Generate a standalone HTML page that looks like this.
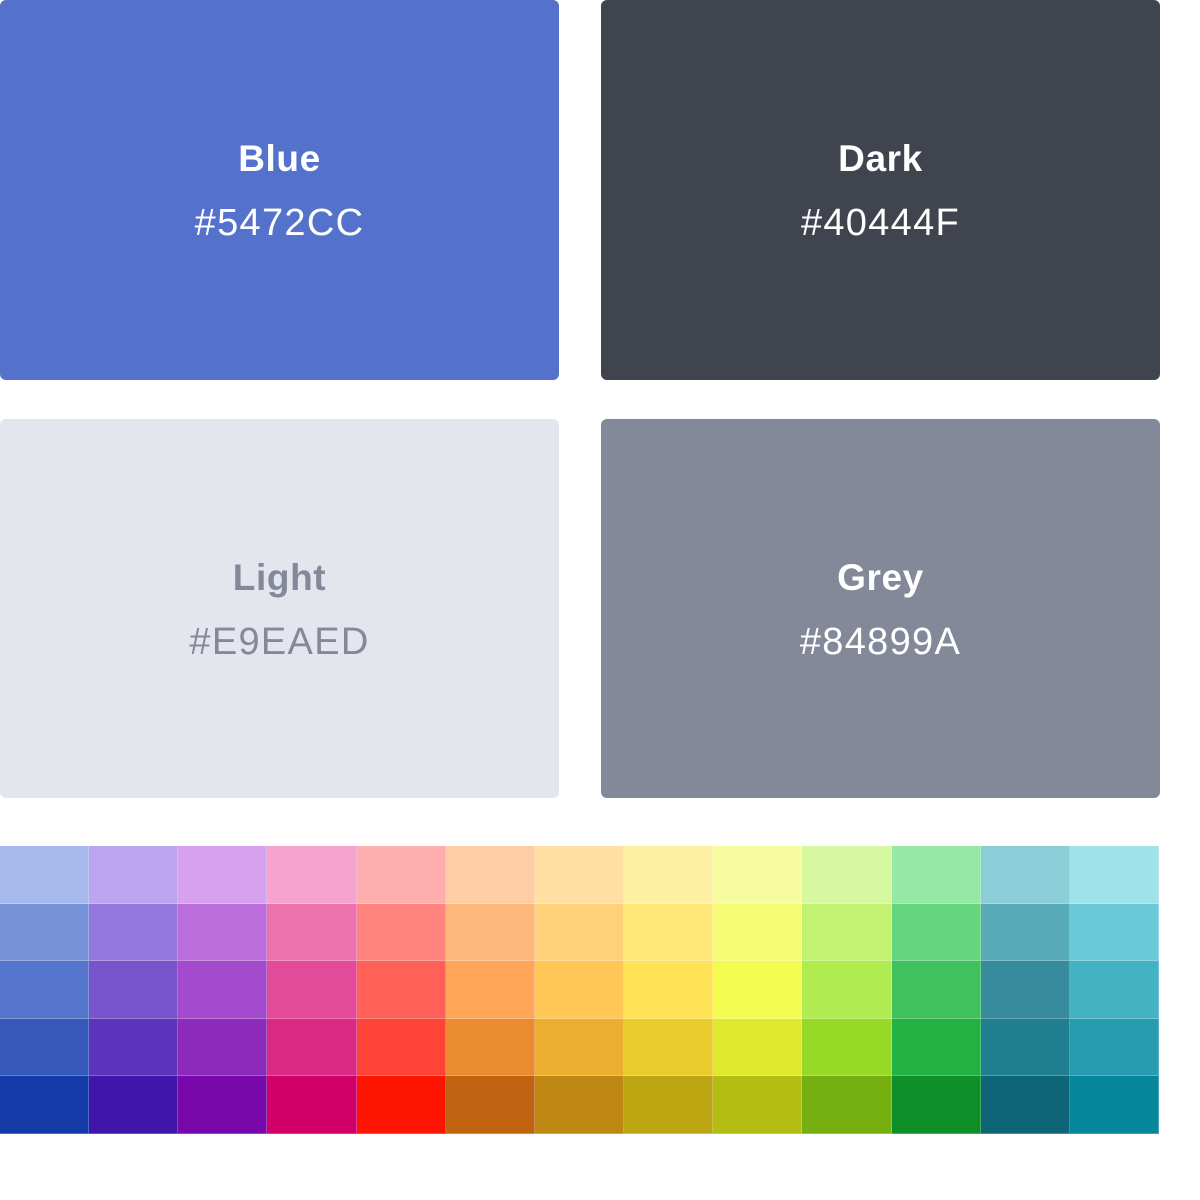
<!DOCTYPE html><html><head><style>
body{margin:0;width:1200px;height:1200px;background:#fff;position:relative;font-family:"Liberation Sans",sans-serif;overflow:hidden}
.c{position:absolute;width:559px;height:380px;border-radius:6px;color:#fff;text-align:center}
.c b{position:absolute;left:0;right:0;top:138px;font-size:37px;font-weight:bold;letter-spacing:.6px}
.c span{position:absolute;left:0;right:0;top:202px;font-size:38px;letter-spacing:1.3px}
#g{position:absolute;left:0;top:846px;width:1159px;height:288px;display:grid;grid-template-columns:repeat(13,1fr);grid-template-rows:repeat(5,1fr)}
#g div{box-shadow:inset -1px -1px 0 rgba(255,255,255,.25)}
</style></head><body>
<div class="c" style="left:0;top:0;background:#5472CC"><b>Blue</b><span>#5472CC</span></div>
<div class="c" style="left:601px;top:0;background:#40444F"><b>Dark</b><span>#40444F</span></div>
<div class="c" style="left:0;top:419px;height:379px;background:#E4E6EE;color:#84899A"><b>Light</b><span>#E9EAED</span></div>
<div class="c" style="left:601px;top:419px;height:379px;background:#84899A"><b>Grey</b><span>#84899A</span></div>
<div id="g"></div>
<script>
var rows=[
["#a7b9ec","#bba5ee","#d6a1ef","#f5a2cd","#ffaeae","#ffcda5","#ffdfa2","#ffefa2","#f8fca0","#d6f8a1","#96e8a6","#8dcdd7","#a0e2ea"],
["#7892da","#9478dd","#bb6ddc","#ec72ae","#ff847e","#ffb87b","#ffd27a","#ffe877","#f6fc74","#c3f272","#65d67d","#57aab8","#6ac9d8"],
["#5574cb","#7753cc","#a44acd","#e34a98","#ff6158","#ffa658","#ffc756","#ffe255","#f3fb51","#b0eb50","#3fc25e","#368c9c","#43b2c3"],
["#3558ba","#5c33bb","#8c2abb","#da2b84","#ff4337","#ea8a31","#ebae2f","#ebcc2e","#dfe72e","#96da27","#23b143","#1f7f90","#279baf"],
["#143aa8","#3f15aa","#7808a9","#d00068","#fc1300","#bf6311","#be8712","#bea512","#b3bd12","#75b010","#0e8f2a","#0d6577","#06869a"]];
var g=document.getElementById('g');rows.forEach(r=>r.forEach(c=>{var d=document.createElement('div');d.style.background=c;g.appendChild(d)}));
</script>
</body></html>
